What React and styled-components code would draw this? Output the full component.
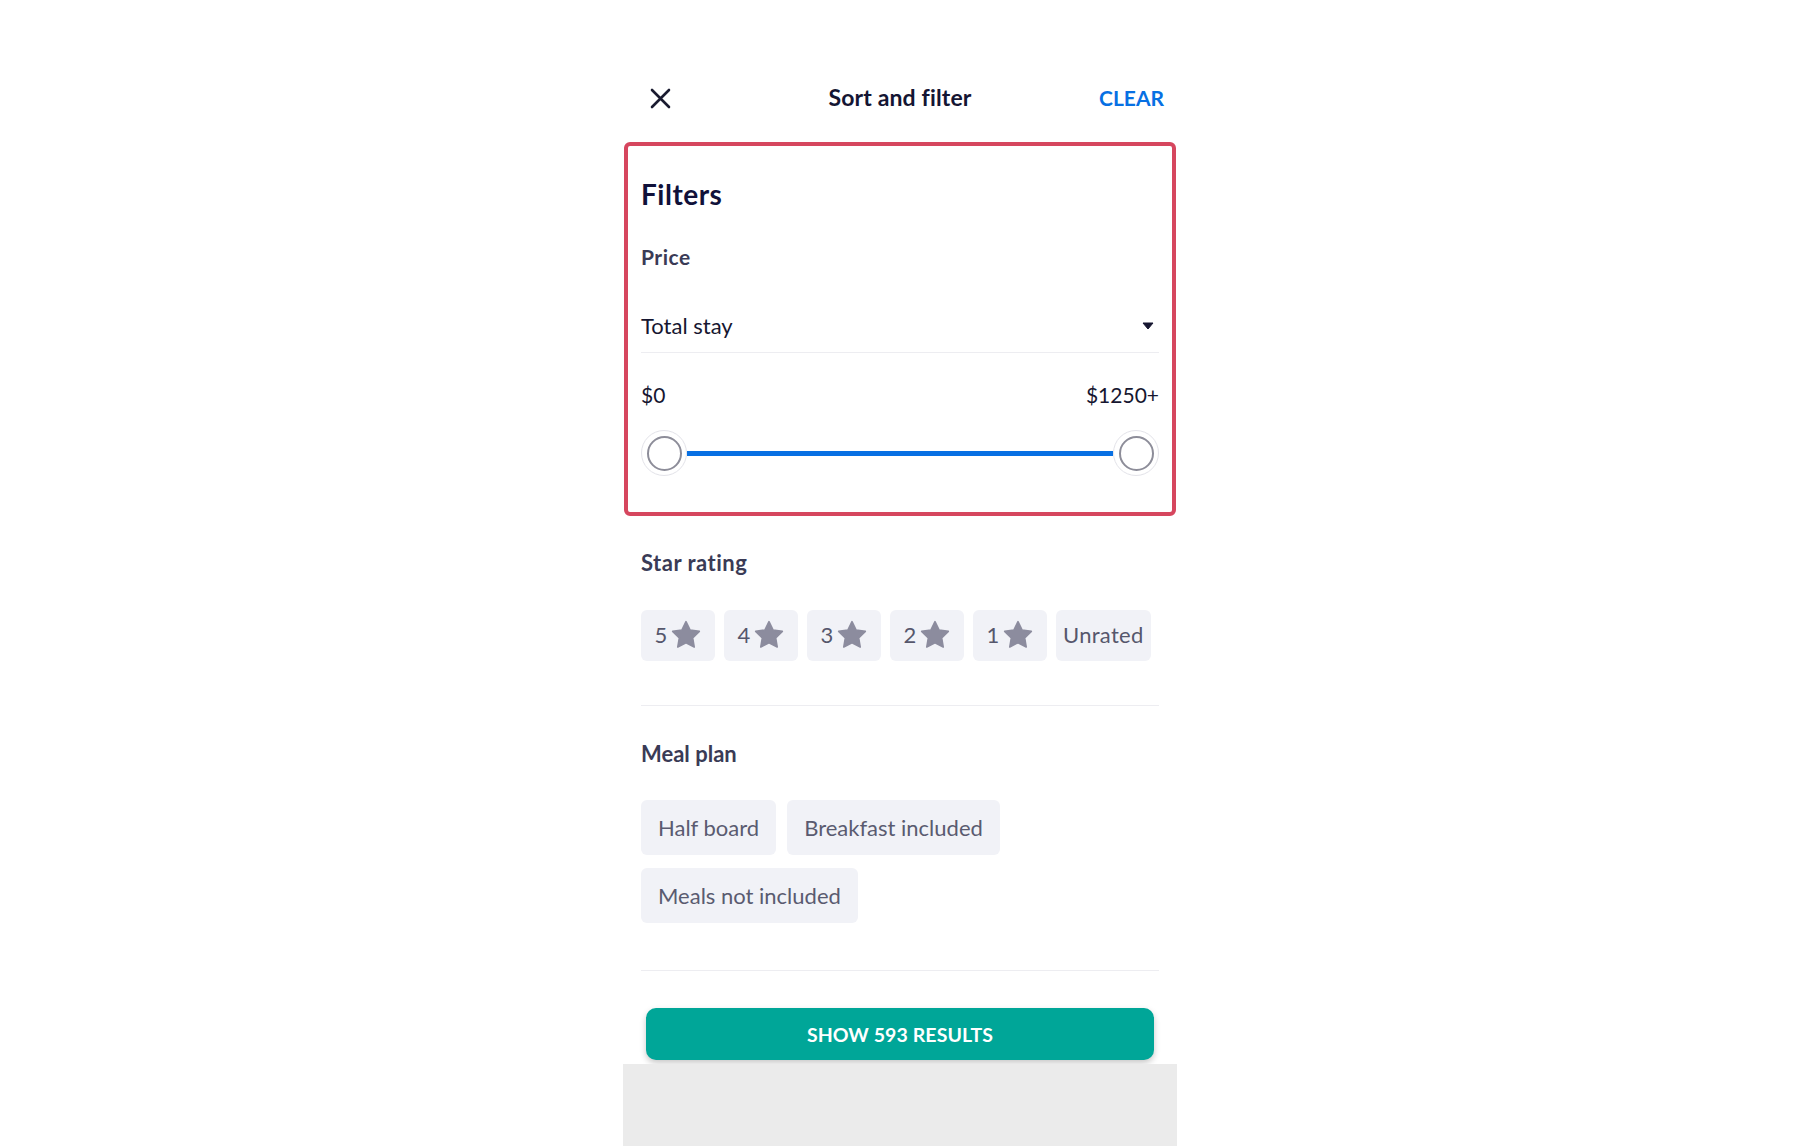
import React from "react";
import styled, { createGlobalStyle } from "styled-components";

const GlobalStyle = createGlobalStyle`
  html, body { margin: 0; padding: 0; background: #ffffff; }
  body { font-family: Lato, "Open Sans", "Liberation Sans", sans-serif; }
  * { box-sizing: border-box; }
`;

const Panel = styled.div`
  width: 554px;
  margin: 0 auto;
  padding-top: 62px;
  display: flex;
  flex-direction: column;
`;

const Header = styled.header`
  height: 72px;
  display: grid;
  grid-template-columns: 1fr auto 1fr;
  align-items: center;
  padding: 0 13px;
`;

const CloseButton = styled.button`
  justify-self: start;
  margin-left: 14px;
  width: 21px;
  height: 21px;
  padding: 0;
  border: 0;
  background: none;
  display: flex;
  cursor: pointer;
`;

const Title = styled.h1`
  margin: 0;
  font-size: 23px;
  line-height: 1.2;
  font-weight: 700;
  color: #141533;
  letter-spacing: 0.15px;
`;

const ClearButton = styled.button`
  justify-self: end;
  padding: 0;
  border: 0;
  background: none;
  font-family: inherit;
  font-size: 21px;
  line-height: 1.2;
  font-weight: 700;
  color: #0770e3;
  cursor: pointer;
`;

const Highlight = styled.section`
  margin: 8px 1px 0;
  border: 4px solid #d6465e;
  border-radius: 6px;
  padding: 32px 13px 35px;
  display: flex;
  flex-direction: column;
`;

const Heading = styled.h2`
  margin: 0;
  font-size: 28px;
  line-height: 1.2;
  font-weight: 700;
  color: #10113a;
  letter-spacing: 0.5px;
`;

const Label = styled.h3`
  margin: ${(p) => p.$top || 0}px 0 0;
  font-size: ${(p) => p.$size || 21}px;
  line-height: 1.2;
  font-weight: 700;
  color: #3a3b56;
  letter-spacing: ${(p) => p.$spacing || 0}px;
`;

const SelectRow = styled.div`
  margin-top: 44px;
  padding-bottom: 13px;
  border-bottom: 1px solid #ededf1;
  display: flex;
  align-items: center;
  justify-content: space-between;
  padding-right: 5px;
`;

const SelectValue = styled.span`
  font-size: 22px;
  line-height: 1.2;
  color: #161630;
`;

const RangeLabels = styled.div`
  margin-top: 29px;
  display: flex;
  justify-content: space-between;
  font-size: 21px;
  line-height: 1.2;
  color: #161630;
`;

const Slider = styled.div`
  margin-top: 22px;
  height: 48px;
  display: flex;
  align-items: center;
`;

const ThumbHalo = styled.div`
  width: 46px;
  height: 46px;
  border-radius: 50%;
  border: 1px solid #e3e3e9;
  background: #ffffff;
  display: flex;
  align-items: center;
  justify-content: center;
  flex: none;
`;

const ThumbKnob = styled.div`
  width: 35px;
  height: 35px;
  border-radius: 50%;
  border: 2px solid #8d8d99;
  background: #ffffff;
`;

const Track = styled.div`
  flex: 1;
  height: 5px;
  background: #0770e3;
`;

const Section = styled.section`
  margin: 0 18px;
  padding: ${(p) => p.$top}px 0 ${(p) => p.$bottom}px;
  border-bottom: 1px solid #ededf1;
  display: flex;
  flex-direction: column;
`;

const ChipRow = styled.div`
  margin-top: 33px;
  display: flex;
  flex-wrap: wrap;
  column-gap: ${(p) => p.$gap}px;
  row-gap: 13px;
`;

const StarChip = styled.button`
  min-width: 74px;
  height: 51px;
  padding: 0 7px;
  border: 0;
  border-radius: 6px;
  background: #f1f2f7;
  display: inline-flex;
  align-items: center;
  justify-content: center;
  gap: 2px;
  font-family: inherit;
  font-size: 22px;
  line-height: 1;
  color: #56576c;
  letter-spacing: 0.3px;
  cursor: pointer;
`;

const MealChip = styled.button`
  height: 55px;
  padding: 0 17px;
  border: 0;
  border-radius: 6px;
  background: #f1f2f7;
  display: inline-flex;
  align-items: center;
  font-family: inherit;
  font-size: 22px;
  line-height: 1;
  color: #5a5b70;
  cursor: pointer;
`;

const ShowButton = styled.button`
  margin: 37px 23px 0;
  height: 52px;
  border: 0;
  border-radius: 10px;
  background: #00a698;
  box-shadow: 0 3px 6px rgba(0, 0, 0, 0.22);
  font-family: inherit;
  font-size: 19.5px;
  font-weight: 700;
  color: #ffffff;
  letter-spacing: 0.1px;
  cursor: pointer;
`;

const BottomArea = styled.div`
  margin-top: 4px;
  height: 82px;
  background: #ebebeb;
`;

const CloseIcon = () => (
  <svg width="21" height="21" viewBox="0 0 21 21">
    <path d="M2 2 L19 19 M19 2 L2 19" stroke="#1a1b30" strokeWidth="2.6" strokeLinecap="round" />
  </svg>
);

const Caret = () => (
  <svg width="12" height="8" viewBox="0 0 12 8">
    <path d="M1 1 H11 L6 7 Z" fill="#161630" stroke="#161630" strokeWidth="1" strokeLinejoin="round" />
  </svg>
);

const Star = () => (
  <svg width="32" height="32" viewBox="0 0 24 24">
    <path
      d="M12 2l3.09 6.26L22 9.27l-5 4.87 1.18 6.88L12 17.77l-6.18 3.25L7 14.14 2 9.27l6.91-1.01L12 2z"
      fill="#8c8c9e"
      stroke="#8c8c9e"
      strokeWidth="1.2"
      strokeLinejoin="round"
    />
  </svg>
);

const Thumb = () => (
  <ThumbHalo>
    <ThumbKnob />
  </ThumbHalo>
);

export default function App() {
  const stars = [5, 4, 3, 2, 1];
  const meals = ["Half board", "Breakfast included", "Meals not included"];
  return (
    <>
      <GlobalStyle />
      <Panel>
        <Header>
          <CloseButton aria-label="Close">
            <CloseIcon />
          </CloseButton>
          <Title>Sort and filter</Title>
          <ClearButton>CLEAR</ClearButton>
        </Header>

        <Highlight>
          <Heading>Filters</Heading>
          <Label $top={32} $spacing={0.5}>Price</Label>
          <SelectRow>
            <SelectValue>Total stay</SelectValue>
            <Caret />
          </SelectRow>
          <RangeLabels>
            <span>$0</span>
            <span>$1250+</span>
          </RangeLabels>
          <Slider>
            <Thumb />
            <Track />
            <Thumb />
          </Slider>
        </Highlight>

        <Section $top={34} $bottom={44}>
          <Label $size={22} $spacing={0.5}>Star rating</Label>
          <ChipRow $gap={9}>
            {stars.map((s) => (
              <StarChip key={s}>
                {s}
                <Star />
              </StarChip>
            ))}
            <StarChip>Unrated</StarChip>
          </ChipRow>
        </Section>

        <Section $top={35} $bottom={47}>
          <Label $size={22}>Meal plan</Label>
          <ChipRow $gap={11}>
            {meals.map((m) => (
              <MealChip key={m}>{m}</MealChip>
            ))}
          </ChipRow>
        </Section>

        <ShowButton>SHOW 593 RESULTS</ShowButton>
        <BottomArea />
      </Panel>
    </>
  );
}
